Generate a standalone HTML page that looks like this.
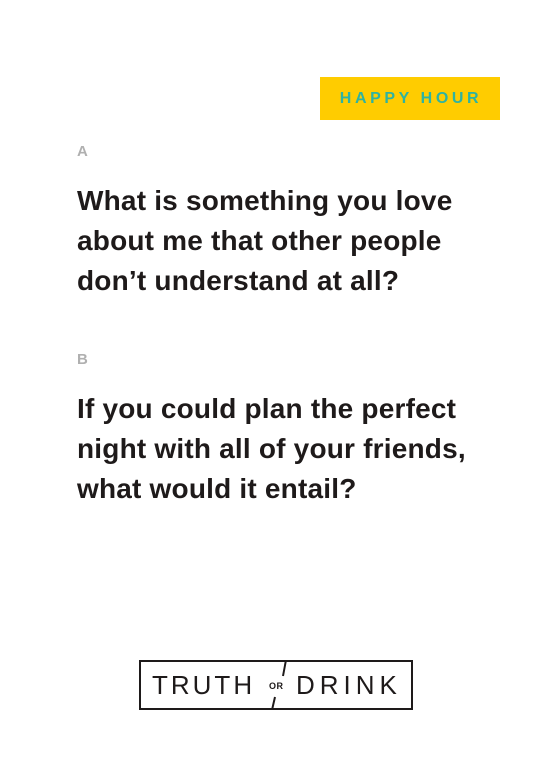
<!DOCTYPE html>
<html><head><style>
body{margin:0;width:552px;height:779px;background:#fff;position:relative;font-family:"Liberation Sans",sans-serif;overflow:hidden}
.badge{position:absolute;left:320px;top:77px;width:180px;height:43px;background:#ffcc00;color:#2fb3a0;font-weight:bold;font-size:16px;letter-spacing:3.6px;line-height:44px;text-align:center;text-indent:2px}
.lab{position:absolute;left:77px;color:#b0b0b0;font-weight:bold;font-size:15px}
.q{position:absolute;left:77px;width:480px;color:#1e1a1a;font-weight:bold;font-size:28px;line-height:40px;letter-spacing:0.2px;white-space:nowrap}
.logo{position:absolute;left:139px;top:660px;width:270px;height:46px;border:2px solid #1e1a1a;color:#1e1a1a}
.logo .t{position:absolute;top:10px;font-size:26px;line-height:26px}
.logo .or{position:absolute;left:128px;top:19px;font-size:9px;font-weight:bold;letter-spacing:0.5px}
</style></head><body>
<div class="badge">HAPPY HOUR</div>
<div class="lab" style="top:143px">A</div>
<div class="q" style="top:181px">What is something you love<br>about me that other people<br>don’t understand at all?</div>
<div class="lab" style="top:351px">B</div>
<div class="q" style="top:389px">If you could plan the perfect<br>night with all of your friends,<br>what would it entail?</div>
<div class="logo">
<span class="t" style="left:11px;letter-spacing:3px">TRUTH</span>
<span class="or">OR</span>
<svg style="position:absolute;left:0;top:0" width="270" height="46"><line x1="145" y1="-2" x2="142" y2="14" stroke="#1e1a1a" stroke-width="2"/><line x1="134" y1="35" x2="131" y2="48" stroke="#1e1a1a" stroke-width="2"/></svg>
<span class="t" style="left:155px;letter-spacing:5px">DRINK</span>
</div>
</body></html>
